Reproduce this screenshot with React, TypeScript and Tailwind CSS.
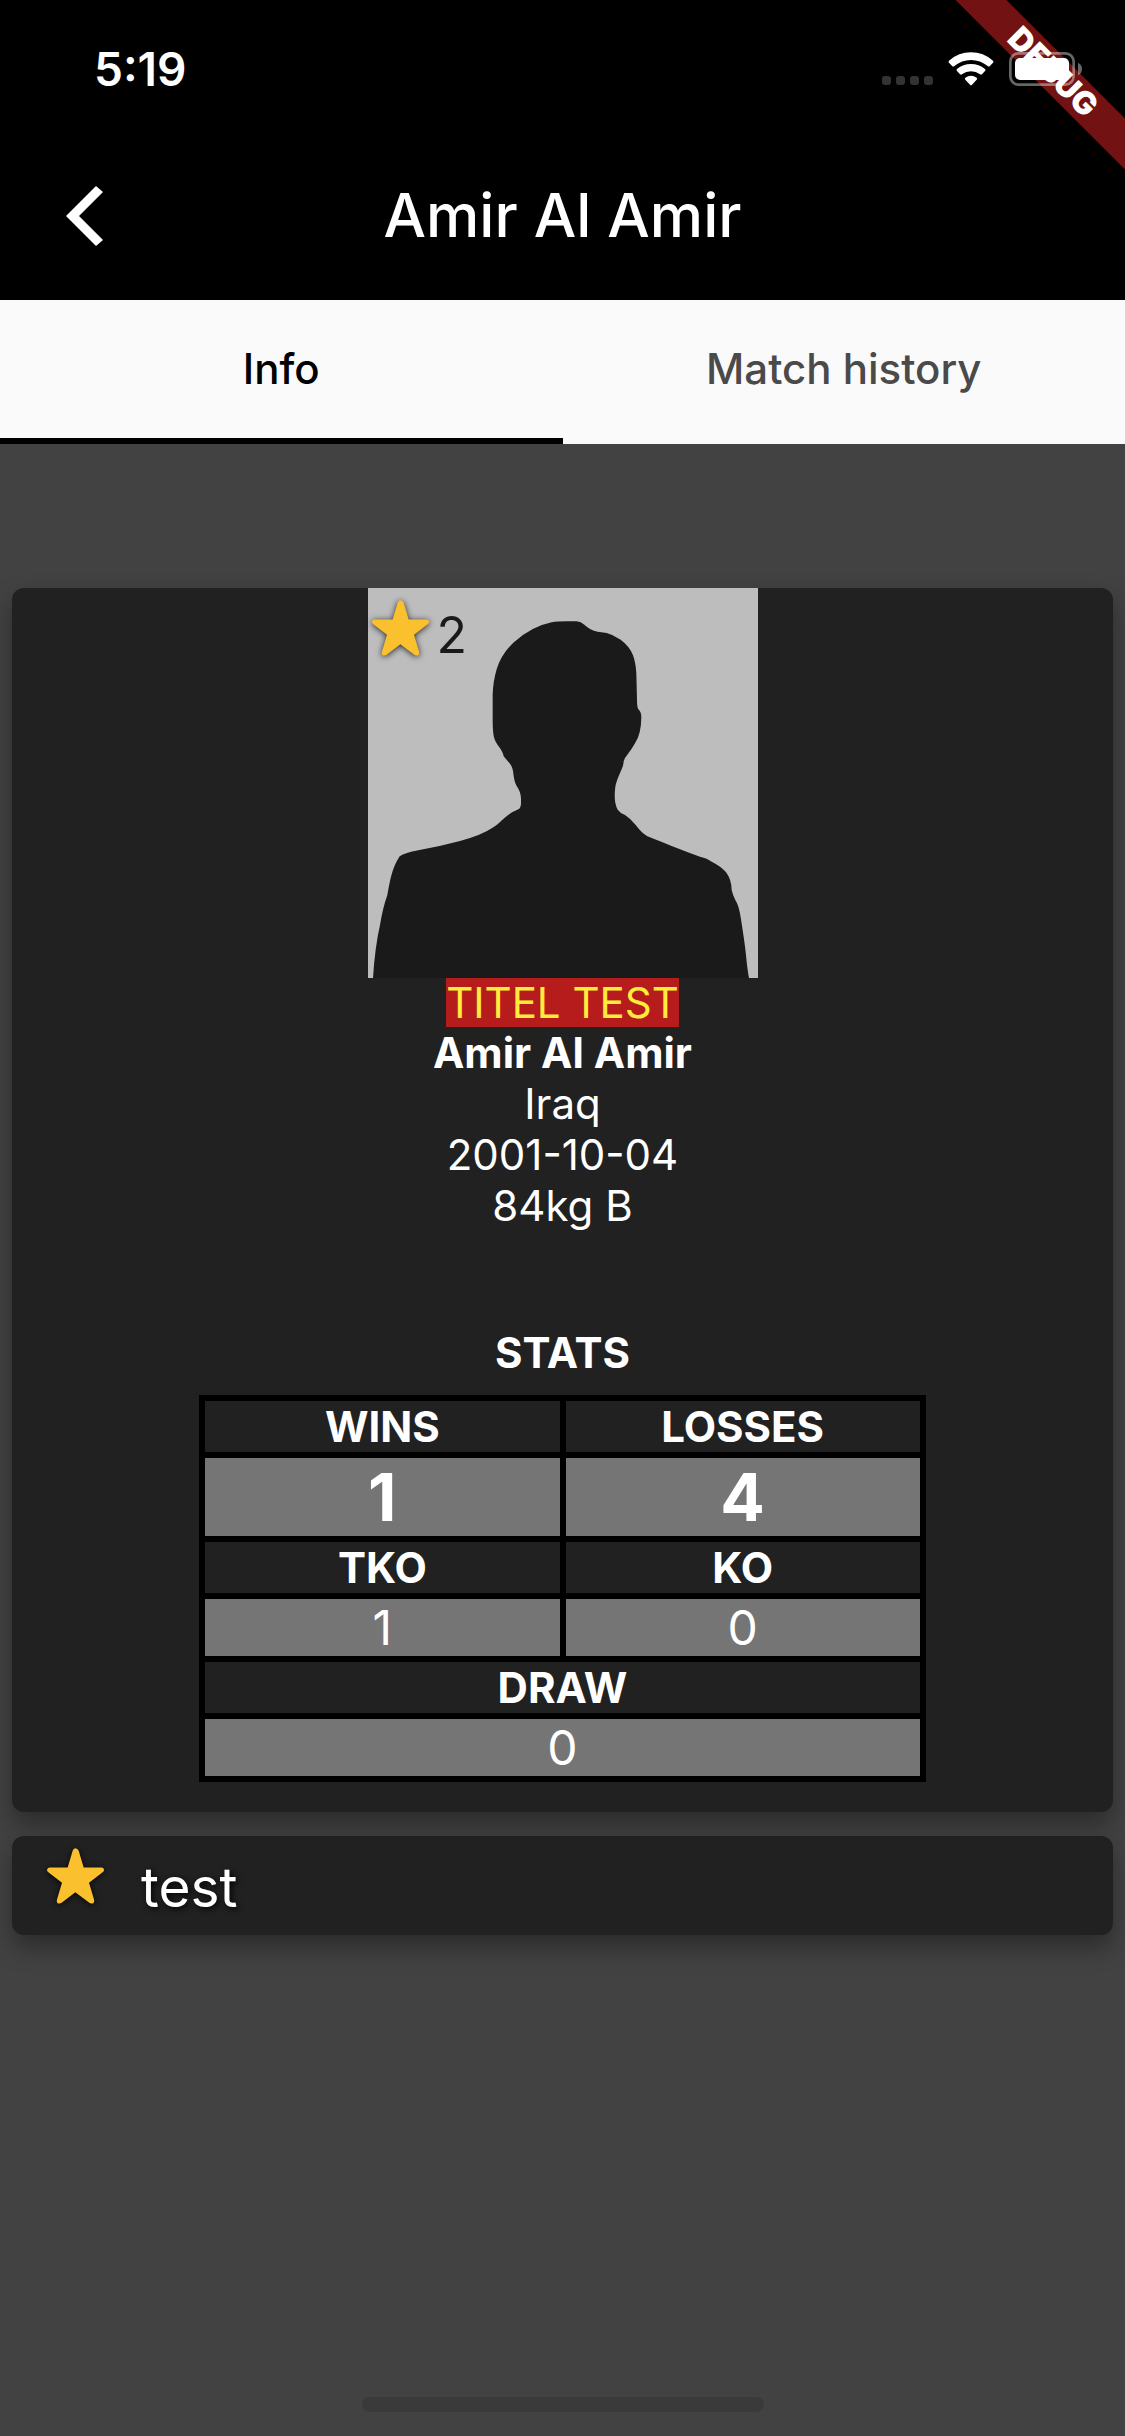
import { useState } from "react";

function Star({ className }: { className: string }) {
  return (
    <svg viewBox="0 0 171 167" className={className} aria-hidden="true">
      <path
        fill="#fbc02d"
        d="M85 0Q92 0 95 8L110 58H163Q171 58 171 66Q171 70 165 74L126 104L141 154Q143 160 139 165Q133 168 127 164L85 132L44 164Q37 168 32 165Q28 161 30 154L45 104L6 74Q0 70 0 66Q1 58 9 58H62L77 8Q79 0 85 0Z"
      />
    </svg>
  );
}

function StatusIcons() {
  return (
    <div className="relative z-20 flex items-center">
      <div className="flex gap-[5px] pt-[22px]">
        {[0, 1, 2, 3].map((i) => (
          <span key={i} className="size-[9px] rounded-[3px] bg-[#333333]" />
        ))}
      </div>
      <svg viewBox="0 0 138 102" className="ml-[15px] h-[34px] w-[46px]" aria-label="Wi-Fi" role="img">
        <g fill="#fff">
          <path d="M3 26Q32 1 69 1T135 26Q138 29 135 32L125 43Q122 45 119 42Q97 24 69 24T19 42Q16 45 13 43L3 32Q0 29 3 26Z" />
          <path d="M27 51Q45 36 69 36T111 51Q114 54 111 57L102 67Q99 69 96 67Q84 58 69 58T42 67Q39 69 36 67L27 57Q24 54 27 51Z" />
          <path d="M52 77Q60 71 69 71T86 77Q89 80 86 83L72 98Q69 101 66 98L52 83Q49 80 52 77Z" />
        </g>
      </svg>
      <svg viewBox="0 0 219 102" className="ml-[15px] h-[34px] w-[73px]" aria-label="Battery" role="img">
        <rect x="4" y="4" width="190" height="94" rx="25" fill="none" stroke="#fff" strokeOpacity="0.4" strokeWidth="8" />
        <path d="M207 32Q219 38 219 51T207 70Z" fill="#fff" fillOpacity="0.4" />
        <rect x="18" y="18" width="162" height="66" rx="15" fill="#fff" />
      </svg>
    </div>
  );
}

function DebugBanner() {
  return (
    <div className="pointer-events-none absolute top-0 right-0 z-10 size-[180px] overflow-hidden">
      <div className="absolute top-[54px] left-[-12px] h-9 w-60 rotate-45 bg-[#731212] text-center text-[32px] leading-9 font-black">
        DEBUG
      </div>
    </div>
  );
}

function Silhouette() {
  return (
    <svg viewBox="54 54 1170 1170" className="size-full" role="img" aria-label="Fighter portrait">
      <rect x="54" y="54" width="1170" height="1170" fill="#bdbdbd" />
      <path
        fill="#1a1a1a"
        d="M69 1224Q75 1130 90 1065Q98 1015 112 975Q118 940 123 920Q132 885 149 859Q165 848 205 841Q270 829 330 813Q395 796 430 772C455 756 465 735 505 718Q513 714 513 700V685Q512 665 500 648Q494 638 491 618Q489 592 480 581Q470 570 461 559Q459 546 447 530Q433 512 431 497Q428 480 428 450V375Q429 335 440 298Q453 254 490 218Q545 169 605 157Q622 154 650 154H680Q693 155 703 164Q720 180 743 185L770 189Q790 194 812 209Q840 230 849 256Q857 277 859 310L861 390Q861 410 864 416Q874 425 874 440Q874 490 855 520Q845 538 832 554Q823 564 821 574Q821 587 813 602Q798 635 796 650Q790 695 803 719Q810 729 825 735Q841 745 857 765Q876 790 892 799Q920 810 965 828Q1010 846 1050 860Q1072 865 1085 875Q1115 890 1128 907Q1144 927 1145 960Q1148 975 1157 992Q1166 1004 1172 1042Q1183 1110 1188 1155Q1192 1200 1197 1224Z"
      />
    </svg>
  );
}

const head = "h-[57px] border-[6px] border-black p-0 text-[42px] leading-[51px] font-bold";
const value = "h-[63px] border-[6px] border-black bg-[#757575] p-0 text-5xl leading-[57px]";
const big = "h-[84px] border-[6px] border-black bg-[#757575] p-0 text-[66px] leading-[78px] font-bold";

export default function App() {
  const [tab, setTab] = useState("Info");
  return (
    <div className="relative flex min-h-screen flex-col bg-[#424242] font-['Inter',sans-serif] text-white">
      <DebugBanner />
      <header className="bg-black">
        <div className="flex h-[132px] items-center justify-between pt-[6px] pr-[43px] pl-[94px]">
          <time className="text-[46px] leading-[54px] font-semibold">5:19</time>
          <StatusIcons />
        </div>
        <div className="grid h-[168px] grid-cols-[168px_1fr_168px] items-center">
          <button type="button" aria-label="Back" className="flex h-full cursor-pointer items-center justify-center">
            <svg viewBox="0 0 37 60" className="h-[60px] w-[37px]" aria-hidden="true">
              <path fill="#fff" d="M30 0L37 6L13 30L37 54L30 60L0 30Z" />
            </svg>
          </button>
          <h1 className="pb-0.5 text-center text-[60px] leading-[72px] font-medium">Amir Al Amir</h1>
        </div>
      </header>

      <div role="tablist" className="grid grid-cols-2 bg-[#fafafa] text-[42px] leading-[51px] font-medium">
        {["Info", "Match history"].map((name) => (
          <button
            key={name}
            type="button"
            role="tab"
            aria-selected={tab === name}
            onClick={() => setTab(name)}
            className="h-36 cursor-pointer border-b-[6px] border-transparent pb-0.5 text-[#4a4a4a] aria-selected:border-black aria-selected:text-black"
          >
            {name}
          </button>
        ))}
      </div>

      <main className="flex flex-col gap-6 px-3 pt-36">
        <section className="flex flex-col items-center rounded-xl bg-[#212121] pb-[30px] text-[42px] leading-[51px] shadow-[0_12px_24px_rgba(0,0,0,0.35)]">
          <div className="relative size-[390px]">
            <Silhouette />
            <div className="absolute top-3 left-1 flex gap-2 text-[#1a1a1a]">
              <Star className="h-14 w-[57px] drop-shadow-[0_1px_3px_rgba(0,0,0,0.8)]" />
              <span className="pt-[5px] text-[50px] leading-[60px]">2</span>
            </div>
          </div>
          <p className="bg-[#b71c1c] leading-[49px] text-[#ffeb3b]">TITEL TEST</p>
          <h2 className="font-bold">Amir Al Amir</h2>
          <p>Iraq</p>
          <p>2001-10-04</p>
          <p>84kg B</p>
          <h3 className="mt-24 mb-[17px] font-bold">STATS</h3>
          <table aria-label="Stats" className="w-[66%] table-fixed border-collapse text-center">
            <tbody>
              <tr>
                <th className={head}>WINS</th>
                <th className={head}>LOSSES</th>
              </tr>
              <tr>
                <td className={big}>1</td>
                <td className={big}>4</td>
              </tr>
              <tr>
                <th className={head}>TKO</th>
                <th className={head}>KO</th>
              </tr>
              <tr>
                <td className={value}>1</td>
                <td className={value}>0</td>
              </tr>
              <tr>
                <th colSpan={2} className={head}>DRAW</th>
              </tr>
              <tr>
                <td colSpan={2} className={value}>0</td>
              </tr>
            </tbody>
          </table>
        </section>

        <section className="flex h-[99px] items-start gap-[37px] rounded-xl bg-[#212121] px-[35px] pt-3 shadow-[0_12px_24px_rgba(0,0,0,0.35)]">
          <Star className="h-14 w-[57px] drop-shadow-[0_1px_3px_rgba(0,0,0,0.8)]" />
          <p className="pt-1.5 text-[55px] leading-[66px] [text-shadow:2px_2px_6px_#000]">test</p>
        </section>
      </main>

      <div className="mx-auto mt-auto mb-6 h-[15px] w-[402px] rounded-full bg-[#3a3a3a]" />
    </div>
  );
}
